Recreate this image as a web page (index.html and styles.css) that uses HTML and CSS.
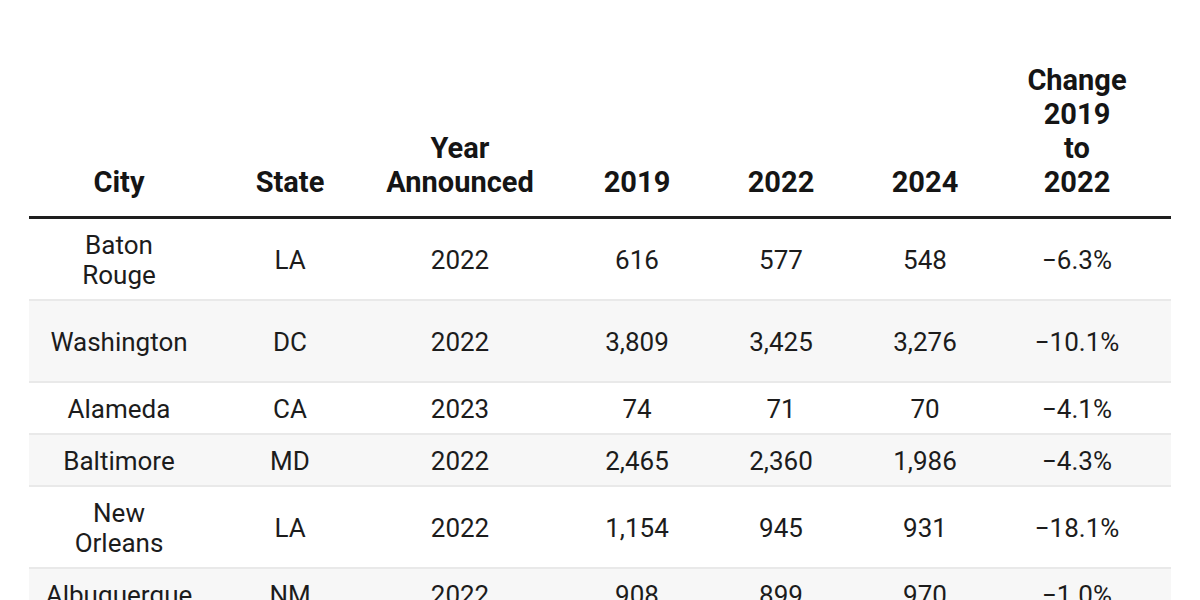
FILE: index.html
```html
<!DOCTYPE html>
<html lang="en">
<head>
<meta charset="utf-8">
<title>City table</title>
<link rel="stylesheet" href="styles.css">
</head>
<body>
<table class="data">
  <colgroup>
    <col class="c-city">
    <col class="c-state">
    <col class="c-year">
    <col class="c-2019">
    <col class="c-2022">
    <col class="c-2024">
    <col class="c-change">
  </colgroup>
  <thead>
    <tr>
      <th>City</th>
      <th>State</th>
      <th>Year<br>Announced</th>
      <th>2019</th>
      <th>2022</th>
      <th>2024</th>
      <th class="last">Change<br>2019<br>to<br>2022</th>
    </tr>
  </thead>
  <tbody>
    <tr>
      <td>Baton<br>Rouge</td><td>LA</td><td>2022</td><td>616</td><td>577</td><td>548</td><td class="last">−6.3%</td>
    </tr>
    <tr class="tall">
      <td>Washington</td><td>DC</td><td>2022</td><td>3,809</td><td>3,425</td><td>3,276</td><td class="last">−10.1%</td>
    </tr>
    <tr>
      <td>Alameda</td><td>CA</td><td>2023</td><td>74</td><td>71</td><td>70</td><td class="last">−4.1%</td>
    </tr>
    <tr>
      <td>Baltimore</td><td>MD</td><td>2022</td><td>2,465</td><td>2,360</td><td>1,986</td><td class="last">−4.3%</td>
    </tr>
    <tr>
      <td>New<br>Orleans</td><td>LA</td><td>2022</td><td>1,154</td><td>945</td><td>931</td><td class="last">−18.1%</td>
    </tr>
    <tr>
      <td>Albuquerque</td><td>NM</td><td>2022</td><td>908</td><td>899</td><td>970</td><td class="last">−1.0%</td>
    </tr>
  </tbody>
</table>
</body>
</html>
```
FILE: styles.css
```css
html, body {
  margin: 0;
  padding: 0;
  background: #ffffff;
}

body {
  font-family: Roboto, "Liberation Sans", Arial, sans-serif;
  color: #1c1c1c;
}

.data {
  margin: 48px 0 0 29px;
  width: 1142px;
  table-layout: fixed;
  border-collapse: collapse;
  border-spacing: 0;
}

.c-city { width: 180px; }
.c-state { width: 162px; }
.c-year { width: 178px; }
.c-2019 { width: 176px; }
.c-2022 { width: 112px; }
.c-2024 { width: 176px; }
.c-change { width: 158px; }

.data th {
  font-weight: 700;
  font-size: 29px;
  line-height: 34px;
  color: #151515;
  text-align: center;
  vertical-align: bottom;
  padding: 15px 0 17px 0;
  border-bottom: 3px solid #1e1e1e;
}

.data td {
  font-size: 26px;
  line-height: 30px;
  font-weight: 400;
  text-align: center;
  vertical-align: middle;
  padding: 11px 0 9px 0;
  border-bottom: 2px solid #e9e9e9;
  white-space: nowrap;
}

.data .tall td {
  height: 60px;
}

.data .last {
  padding-right: 30px;
}

.data tbody tr:nth-child(even) td {
  background: #f7f7f7;
}
```
